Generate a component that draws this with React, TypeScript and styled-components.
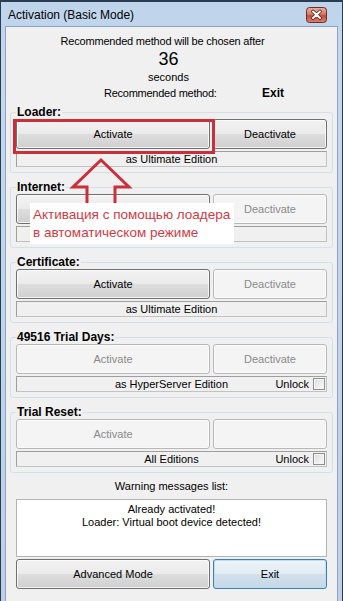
import React from 'react';
import styled, { createGlobalStyle, css } from 'styled-components';

const GlobalStyle = createGlobalStyle`
  html, body {
    margin: 0;
    padding: 0;
    background: #fff;
  }
  body {
    font-family: "Liberation Sans", Arial, sans-serif;
    font-size: 11px;
    color: #000;
  }
  * {
    box-sizing: border-box;
  }
`;

const Window = styled.div`
  position: relative;
  width: 343px;
  height: 601px;
  display: flex;
  flex-direction: column;
  background: linear-gradient(#bed4eb, #c4d8ee 60px, #bcd1e8);
  border: 1px solid #2a3c55;
  border-top-width: 2px;
  border-bottom: none;
  overflow: hidden;
`;

const TitleBar = styled.div`
  flex: none;
  height: 24px;
  display: flex;
  align-items: center;
  justify-content: space-between;
  padding: 2px 15px 0 7px;
  font-size: 12px;
  color: #000;
`;

const CloseButton = styled.div`
  width: 21px;
  height: 16px;
  display: flex;
`;

const Client = styled.div`
  flex: 1;
  margin: 0 4px;
  padding: 7px 4px 0;
  display: flex;
  flex-direction: column;
  background: #f0f0f0;
  border: 1px solid #8da5c1;
  border-bottom: none;
`;

const Line = styled.div<{ $size?: number; $height: number; $gap?: number; $shift?: number; $tight?: boolean }>`
  text-align: center;
  font-size: ${({ $size }) => $size || 11}px;
  line-height: ${({ $height }) => $height}px;
  margin-top: ${({ $gap }) => $gap || 0}px;
  padding-right: ${({ $shift }) => $shift || 0}px;
  letter-spacing: ${({ $tight }) => ($tight ? '-0.2px' : 'normal')};
`;

const MethodRow = styled.div`
  display: grid;
  grid-template-columns: 158px auto;
  padding-left: 94px;
  margin: 2px 0 5px;
  line-height: 14px;
  letter-spacing: -0.25px;
`;

const Bold = styled.span`
  font-weight: bold;
  font-size: 12px;
  letter-spacing: 0;
`;

const Group = styled.fieldset`
  margin: 0;
  min-width: 0;
  padding: 0 5px 5px;
  border: 1px solid #d5dfe5;
  border-radius: 3px;
  & + & {
    margin-top: 7px;
  }
`;

const Legend = styled.legend`
  padding: 0 1px;
  font-weight: bold;
  font-size: 12px;
  line-height: 14px;
`;

const ButtonRow = styled.div`
  display: grid;
  grid-template-columns: 194px 1fr;
  gap: 3px;
`;

const Button = styled.button<{ $default?: boolean }>`
  height: 30px;
  padding: 0;
  font: 11px "Liberation Sans", Arial, sans-serif;
  color: #000;
  border: 1px solid #707070;
  border-radius: 3px;
  background: linear-gradient(#f2f2f2 0%, #ebebeb 48%, #dddddd 52%, #cfcfcf 100%);
  box-shadow: inset 0 0 0 1px rgba(255, 255, 255, 0.75);
  &:disabled {
    color: #8a8a8a;
    border-color: #b8b8b8;
    background: #f4f4f4;
    box-shadow: inset 0 0 0 1px #fbfbfb;
  }
  ${({ $default }) =>
    $default &&
    css`
      border-color: #3c7fb1;
      background: linear-gradient(#edf4f9 0%, #e2ecf4 48%, #d2e0eb 52%, #c6d7e6 100%);
      box-shadow: inset 0 0 0 1px #b9e0f4;
    `}
`;

const Field = styled.div`
  margin-top: 2px;
  height: 16px;
  display: grid;
  grid-template-columns: 1fr auto 1fr;
  align-items: center;
  line-height: 14px;
  border: 1px solid;
  border-color: #9e9e9e #c2c2c2 #c2c2c2 #9e9e9e;
  background: #f0f0f0;
`;

const FieldText = styled.span`
  grid-column: 2;
  white-space: nowrap;
`;

const Unlock = styled.label`
  grid-column: 3;
  justify-self: end;
  display: flex;
  align-items: center;
  gap: 4px;
  margin-right: 1px;
`;

const Check = styled.span`
  width: 12px;
  height: 12px;
  border: 1px solid #8e8f8f;
  background: linear-gradient(135deg, #dcdcdc, #fcfcfc);
  box-shadow: inset 0 0 0 1px #f4f4f4;
`;

const MessageBox = styled.div`
  margin: 6px 6px 0;
  height: 58px;
  padding-top: 3px;
  background: #fff;
  border: 1px solid #b4b4b4;
  text-align: center;
  line-height: 13px;
`;

const Footer = styled(ButtonRow)`
  margin: 2px 6px 0;
`;

const Highlight = styled.div`
  position: absolute;
  left: 12px;
  top: 117px;
  width: 202px;
  height: 35px;
  border: 3px solid #c9303a;
`;

const Arrow = styled.svg`
  position: absolute;
  left: 67px;
  top: 153px;
`;

const Note = styled.div`
  position: absolute;
  left: 29px;
  top: 201px;
  width: 204px;
  height: 41px;
  padding: 3px 0 0 3px;
  background: #fff;
  color: #d23a44;
  font-family: "Liberation Sans", Arial, sans-serif;
  font-size: 13.5px;
  line-height: 18px;
  white-space: nowrap;
`;

type GroupData = {
  title: string;
  first: string;
  activate: boolean;
  deactivate: boolean;
  second: string;
  edition: string;
  unlock?: boolean;
};

// the Internet row sits under the note, so its labels are hidden there
const groups: GroupData[] = [
  { title: 'Loader:', first: 'Activate', activate: true, deactivate: true, second: 'Deactivate', edition: 'as Ultimate Edition' },
  { title: 'Internet:', first: '', activate: true, deactivate: false, second: 'Deactivate', edition: '' },
  { title: 'Certificate:', first: 'Activate', activate: true, deactivate: false, second: 'Deactivate', edition: 'as Ultimate Edition' },
  { title: '49516 Trial Days:', first: 'Activate', activate: false, deactivate: false, second: 'Deactivate', edition: 'as HyperServer Edition', unlock: true },
  { title: 'Trial Reset:', first: 'Activate', activate: false, deactivate: false, second: '', edition: 'All Editions', unlock: true },
];

const CloseIcon = () => (
  <svg width="21" height="16" viewBox="0 0 21 16">
    <defs>
      <linearGradient id="closeGrad" x1="0" y1="0" x2="0" y2="1">
        <stop offset="0" stopColor="#eab0a3" />
        <stop offset="0.45" stopColor="#d47b6a" />
        <stop offset="0.55" stopColor="#c24b3a" />
        <stop offset="1" stopColor="#d98470" />
      </linearGradient>
    </defs>
    <rect x="0.5" y="0.5" width="20" height="15" rx="3" fill="url(#closeGrad)" stroke="#6e2c23" />
    <path d="M7 4.5 L14 11 M14 4.5 L7 11" stroke="#5a2119" strokeWidth="3.6" strokeLinecap="round" />
    <path d="M7 4.5 L14 11 M14 4.5 L7 11" stroke="#fff" strokeWidth="2" strokeLinecap="round" />
  </svg>
);

export default function App() {
  return (
    <>
      <GlobalStyle />
      <Window>
        <TitleBar>
          <span>Activation (Basic Mode)</span>
          <CloseButton>
            <CloseIcon />
          </CloseButton>
        </TitleBar>
        <Client>
          <Line $height={15} $shift={18} $tight>
            Recommended method will be chosen after
          </Line>
          <Line $size={18} $height={21} $shift={6}>
            36
          </Line>
          <Line $height={14} $shift={6}>
            seconds
          </Line>
          <MethodRow>
            <span>Recommended method:</span>
            <Bold>Exit</Bold>
          </MethodRow>

          {groups.map((g) => (
            <Group key={g.title}>
              <Legend>{g.title}</Legend>
              <ButtonRow>
                <Button disabled={!g.activate}>{g.first}</Button>
                <Button disabled={!g.deactivate}>{g.second}</Button>
              </ButtonRow>
              <Field>
                <FieldText>{g.edition}</FieldText>
                {g.unlock && (
                  <Unlock>
                    Unlock
                    <Check />
                  </Unlock>
                )}
              </Field>
            </Group>
          ))}

          <Line $height={14} $gap={6}>
            Warning messages list:
          </Line>
          <MessageBox>
            Already activated!
            <br />
            Loader: Virtual boot device detected!
          </MessageBox>
          <Footer>
            <Button>Advanced Mode</Button>
            <Button $default>Exit</Button>
          </Footer>
        </Client>

        <Highlight />
        <Arrow width="66" height="52" viewBox="0 0 66 52">
          <path
            d="M33 5 L5 32 L19 32 L19 52 L47 52 L47 32 L61 32 Z"
            fill="none"
            stroke="#c9303a"
            strokeWidth="3"
            strokeLinejoin="miter"
          />
        </Arrow>
        <Note>
          Активация с помощью лоадера
          <br />в автоматическом режиме
        </Note>
      </Window>
    </>
  );
}
